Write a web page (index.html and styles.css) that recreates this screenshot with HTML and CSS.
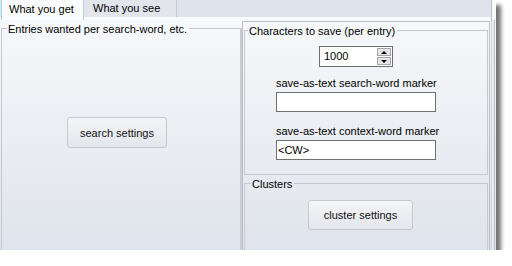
FILE: index.html
```html
<!DOCTYPE html>
<html>
<head>
<meta charset="utf-8">
<link rel="stylesheet" href="styles.css">
</head>
<body>
<div class="window">
  <div class="tabs">
    <div class="tab active">What you get</div>
    <div class="tab">What you see</div>
  </div>
  <div class="content">
    <fieldset class="group left">
      <legend>Entries wanted per search-word, etc.</legend>
      <button class="btn search">search settings</button>
    </fieldset>
    <div class="panel">
      <fieldset class="group chars">
        <legend>Characters to save (per entry)</legend>
        <div class="col">
          <div class="spin">
            <span class="val">1000</span>
            <div class="arrows">
              <span class="arrow up"></span>
              <span class="arrow down"></span>
            </div>
          </div>
          <div class="label first">save-as-text search-word marker</div>
          <div class="field"></div>
          <div class="label">save-as-text context-word marker</div>
          <div class="field">&lt;CW&gt;</div>
        </div>
      </fieldset>
      <fieldset class="group clusters">
        <legend>Clusters</legend>
        <button class="btn cluster">cluster settings</button>
      </fieldset>
    </div>
    <div class="edge"></div>
  </div>
</div>
</body>
</html>
```
FILE: styles.css
```css
* { box-sizing: border-box; }
html, body { margin: 0; padding: 0; background: #ffffff; }
body {
  font-family: "Liberation Sans", Arial, sans-serif;
  font-size: 11px;
  color: #000;
}
.window {
  width: 496px;
  height: 250px;
  display: flex;
  flex-direction: column;
  overflow: hidden;
  background: linear-gradient(#f9fafc, #dfe3eb);
  box-shadow: 5px 5px 4px rgba(0,0,0,0.55);
}
.tabs {
  height: 20px;
  flex: none;
  display: flex;
  align-items: flex-start;
  background: linear-gradient(#dfe4ec 0 17px, #f8f9fb 17px);
  border-right: 1px solid #b8bec8;
  margin-right: 4px;
}
.tab {
  height: 17px;
  line-height: 17px;
  padding-left: 9px;
  width: 93px;
  background: #e2e6ec;
  border-right: 1px solid #c6ccd6;
}
.tab.active {
  height: 20px;
  width: 83px;
  padding-left: 7px;
  padding-top: 1px;
  margin-left: 1px;
  background: #fbfcfd;
  border-left: 1px solid #a6d8e9;
  border-right: 1px solid #c6ccd6;
}
.content {
  flex: 1;
  display: flex;
  align-items: stretch;
}
.group {
  margin: 0;
  padding: 0;
  min-width: 0;
  border: 1px solid #c5c8cd;
  border-bottom: none;
}
.group legend {
  padding: 2px 2px 0 1px;
  line-height: 12px;
}
.left {
  margin: 1px 0 0 1px;
  width: 241px;
  border-right: 2px solid #c9ccd1;
}
.left legend { margin-left: 5px; }
.btn {
  display: flex;
  align-items: center;
  justify-content: center;
  font-family: inherit;
  font-size: 11px;
  color: #111;
  border: 1px solid #c4c8cf;
  border-radius: 3px;
  background: linear-gradient(#f4f5f7, #e3e6ec);
  padding: 0;
}
.search {
  margin: 82px 0 0 65px;
  width: 100px;
  height: 31px;
}
.panel {
  margin-top: 1px;
  width: 248px;
  border: 1px solid #bcc0c6;
  border-bottom: none;
  padding: 1px 1px 0;
  display: flex;
  flex-direction: column;
}
.chars {
  height: 152px;
  border-bottom: 1px solid #c5c8cd;
}
.chars legend { margin-left: 3px; }
.col {
  width: 160px;
  margin: 9px 0 0 31px;
  display: flex;
  flex-direction: column;
  align-items: flex-start;
}
.spin {
  align-self: center;
  width: 74px;
  height: 21px;
  border: 1px solid #707070;
  background: #fff;
  display: flex;
  align-items: center;
  justify-content: space-between;
  padding: 0 1px 0 4px;
}
.val { line-height: 13px; }
.arrows {
  display: flex;
  flex-direction: column;
  gap: 1px;
  width: 14px;
}
.arrow {
  height: 8px;
  border: 1px solid #a7a7a7;
  background: #e6e6e6;
  display: flex;
  align-items: center;
  justify-content: center;
}
.arrow::after {
  content: "";
  width: 0;
  height: 0;
  border-left: 3px solid transparent;
  border-right: 3px solid transparent;
}
.up::after { border-bottom: 3px solid #000; }
.down::after { border-top: 3px solid #000; }
.label {
  line-height: 13px;
  margin-top: 13px;
  white-space: nowrap;
}
.label.first { margin-top: 10px; }
.field {
  margin-top: 2px;
  width: 160px;
  height: 20px;
  border: 1px solid #6f6f6f;
  background: #fff;
  line-height: 18px;
  padding-left: 1px;
}
.field + .label { margin-top: 13px; }
.label + .field { margin-top: 2px; }
.clusters {
  flex: 1;
  margin-top: 1px;
}
.clusters legend { margin-left: 6px; }
.cluster {
  margin: 10px 0 0 63px;
  width: 105px;
  height: 30px;
}
.edge {
  flex: 1;
  margin-left: 1px;
  border-left: 1px solid #cfd3d9;
  border-right: 1px solid #b9bec6;
  margin-right: 1px;
  background: linear-gradient(90deg, #eef0f4, #e2e6ec);
}
```
